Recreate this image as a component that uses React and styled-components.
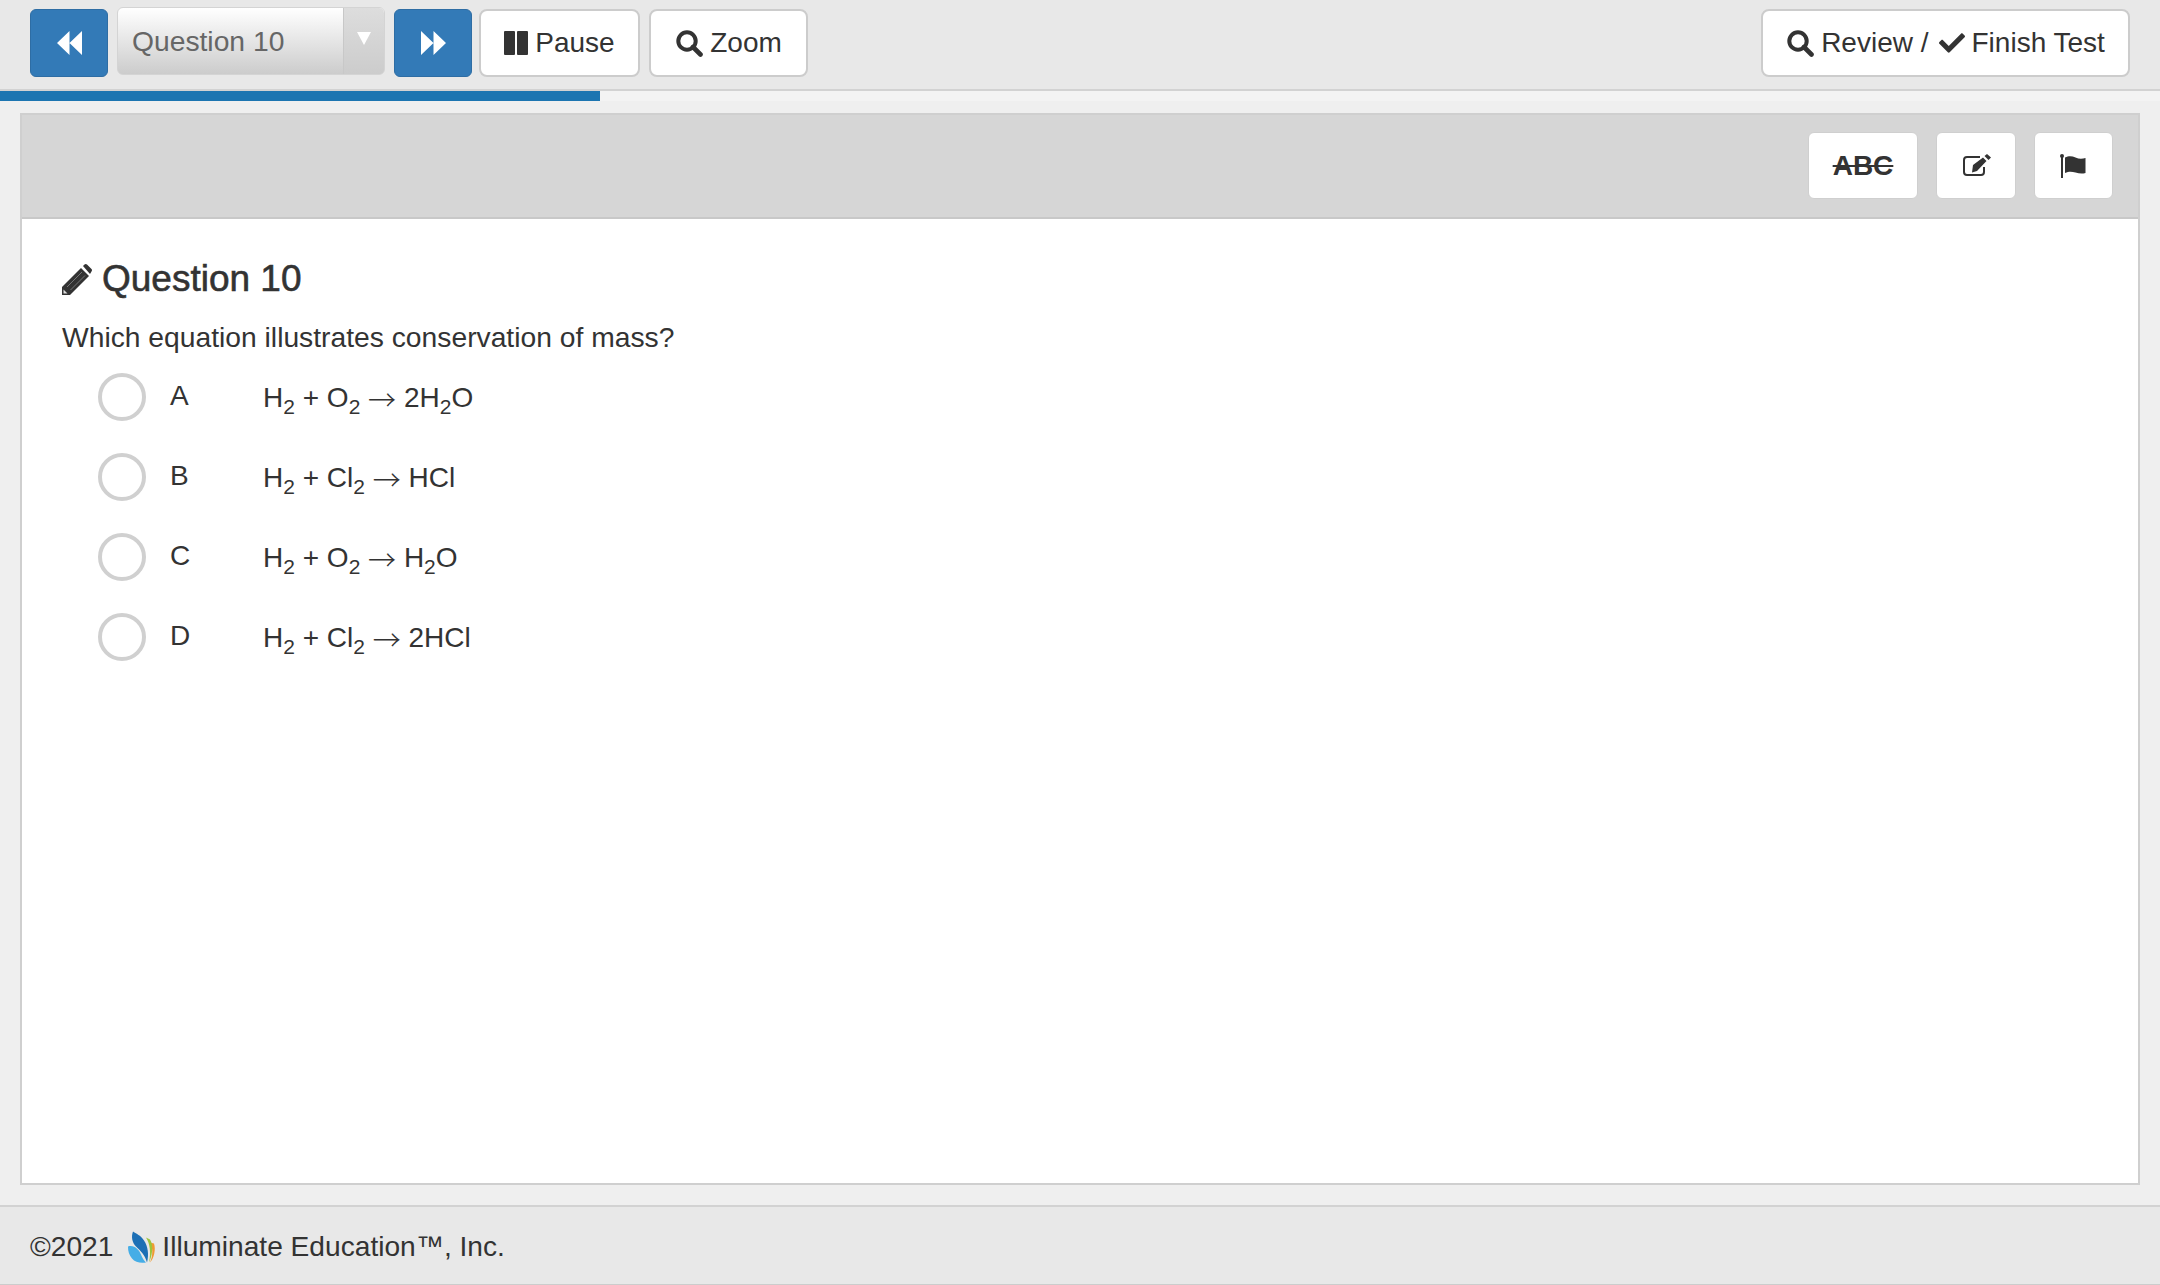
import React from 'react';
import styled, { createGlobalStyle } from 'styled-components';
import { FaCheck } from 'react-icons/fa';

const Global = createGlobalStyle`
  html, body { margin: 0; padding: 0; }
  body {
    background: #efefef;
    color: #333;
    font-family: "Liberation Sans", Arial, sans-serif;
    font-size: 28.25px;
  }
`;

const Page = styled.div`
  height: 1285px;
  display: flex;
  flex-direction: column;
  overflow: hidden;
`;

const TopBar = styled.header`
  height: 89px;
  box-sizing: content-box;
  flex: none;
  background: #e8e8e8;
  border-bottom: 2px solid #d2d2d2;
  display: flex;
  align-items: flex-start;
  padding: 0 30px 0 30px;
`;

const Group = styled.div`
  display: flex;
  align-items: flex-start;
  gap: 9px;
`;

const Spacer = styled.div`
  flex: 1;
`;

const NavButton = styled.button`
  width: 78px;
  height: 68px;
  margin-top: 9px;
  padding: 0;
  display: flex;
  align-items: center;
  justify-content: center;
  background: #337ab7;
  border: 1px solid #2e6da4;
  border-radius: 6px;
`;

const Select = styled.div`
  width: 268px;
  height: 68px;
  margin-top: 7px;
  box-sizing: border-box;
  display: flex;
  border: 1px solid #d4d4d4;
  border-radius: 6px;
  overflow: hidden;
  background: linear-gradient(#ffffff, #cccccc);
`;

const SelectLabel = styled.div`
  flex: 1;
  padding-left: 14px;
  line-height: 66px;
  color: #666;
  font-size: 28.25px;
`;

const SelectArrow = styled.div`
  width: 41px;
  display: flex;
  justify-content: center;
  padding-top: 24px;
  box-sizing: border-box;
  background: linear-gradient(#dddddd, #cccccc);
  border-left: 1px solid #c8c8c8;
`;

const Triangle = styled.div`
  width: 0;
  height: 0;
  border-left: 7px solid transparent;
  border-right: 7px solid transparent;
  border-top: 13px solid #fff;
`;

const ToolButton = styled.button`
  height: 68px;
  margin-top: 9px;
  margin-left: ${p => p.$ml || 0}px;
  width: ${p => p.$w}px;
  padding: 0;
  display: flex;
  align-items: center;
  justify-content: center;
  gap: 7px;
  background: #fff;
  border: 2px solid #ccc;
  border-radius: 8px;
  color: #333;
  font-family: inherit;
  font-size: 28px;
`;

const Check = styled(FaCheck)`
  margin-left: 3px;
`;

const Track = styled.div`
  height: 10px;
  flex: none;
  background: #f3f3f3;
`;

const Fill = styled.div`
  height: 100%;
  background: #1c75b1;
`;

const Main = styled.main`
  flex: 1;
  min-height: 0;
  display: flex;
  padding: 12px 20px 20px 20px;
`;

const Panel = styled.section`
  flex: 1;
  display: flex;
  flex-direction: column;
  background: #fff;
  border: 2px solid #cfcfcf;
`;

const PanelHead = styled.div`
  height: 104px;
  flex: none;
  box-sizing: border-box;
  display: flex;
  align-items: flex-start;
  justify-content: flex-end;
  gap: 18px;
  padding: 17px 25px 0 0;
  background: #d6d6d6;
  border-bottom: 2px solid #c8c8c8;
`;

const HeadButton = styled.button`
  width: ${p => p.$w}px;
  height: 67px;
  padding: 0;
  display: flex;
  align-items: center;
  justify-content: center;
  background: #fff;
  border: 1px solid #cfcfcf;
  border-radius: 6px;
  color: #333;
  font-family: inherit;
  font-size: 28px;
  font-weight: 700;
  text-decoration: line-through;
`;

const Body = styled.div`
  padding: 39px 0 0 40px;
`;

const Heading = styled.h2`
  margin: 0;
  height: 42px;
  display: flex;
  align-items: center;
  gap: 10px;
  font-size: 37px;
  font-weight: 400;
  -webkit-text-stroke: 0.6px #333;
  line-height: 42px;
`;

const Prompt = styled.p`
  margin: 20px 0 0;
  font-size: 28.25px;
  line-height: 34px;
`;

const Options = styled.div`
  margin-top: 19px;
  display: flex;
  flex-direction: column;
  gap: 32px;
`;

const Option = styled.div`
  height: 48px;
  display: flex;
  align-items: center;
  padding-left: 36px;
`;

const Radio = styled.span`
  width: 48px;
  height: 48px;
  box-sizing: border-box;
  border: 4px solid #d0d0d0;
  border-radius: 50%;
  background: #fff;
`;

const Letter = styled.span`
  width: 93px;
  margin-left: 24px;
  margin-top: -3px;
  font-size: 28px;
`;

const Formula = styled.span`
  margin-top: 1px;
  font-size: 28px;
  sub {
    font-size: 21px;
    line-height: 0;
  }
`;

const Arrow = styled.span`
  font-family: "Noto Sans CJK SC", sans-serif;
  font-weight: 300;
  font-size: 28px;
  line-height: 0;
  vertical-align: -4px;
`;

const Footer = styled.footer`
  height: 80px;
  flex: none;
  display: flex;
  align-items: center;
  padding: 3px 0 0 30px;
  box-sizing: border-box;
  background: #e8e8e8;
  border-top: 2px solid #d2d2d2;
  border-bottom: 1px solid #cccccc;
  font-size: 28.15px;
`;

const Logo = styled.svg`
  margin: 0 6px 0 15px;
`;

const Search = ({ size = 28 }) => (
  <svg width={size} height={size} viewBox="0 0 28 28" fill="none" stroke="#333">
    <circle cx="12" cy="12" r="8.7" strokeWidth="4" />
    <path d="M18 18l7.5 7.5" strokeWidth="4.6" strokeLinecap="round" />
  </svg>
);

const Back = () => (
  <svg width="25" height="24" viewBox="0 0 25 24" fill="#fff">
    <path d="M0 12 12.500 0v24zM12.500 12 25 0v24z" />
  </svg>
);

const Forward = () => (
  <svg width="25" height="24" viewBox="0 0 25 24" fill="#fff">
    <path d="M0 0l12.500 12L0 24zM12.500 0 25 12 12.500 24z" />
  </svg>
);

const Pause = () => (
  <svg width="24" height="24" viewBox="0 0 24 24" fill="#333">
    <rect x="0" y="0" width="11" height="24" rx="1" />
    <rect x="13" y="0" width="11" height="24" rx="1" />
  </svg>
);

const Pencil = () => (
  <svg width="30" height="31" viewBox="0 0 30 31">
    <path d="M0 31v-8L19 4l8 8L8 31zM21 2l1.500-1.500a2 2 0 0 1 2.500 0l4.500 4.500a2 2 0 0 1 0 2.500L28 10z" fill="#333" />
    <path d="M5 23 20 8M8.500 26 23 11.500" stroke="#888" strokeWidth="0.8" />
    <path d="M1.500 25.500 5.500 29.500H1.500z" fill="#ddd" />
  </svg>
);

const EditIcon = () => (
  <svg width="29" height="23" viewBox="0 0 29 23">
    <path d="M18 3H5a3 3 0 0 0-3 3v12a3 3 0 0 0 3 3h14a3 3 0 0 0 3-3v-5" fill="none" stroke="#333" strokeWidth="2" />
    <path d="M11 11 21 3.500l3.500 3.500-9.500 10-5 1.500zM22.500 2l2.500-2 4 3.500-2.500 2.500z" fill="#333" />
  </svg>
);

const FlagIcon = () => (
  <svg width="28" height="24" viewBox="0 0 28 24" fill="#333">
    <rect x="1" y="1" width="2" height="23" />
    <circle cx="2" cy="2" r="2" />
    <path d="M5 3.500c4-2 7-1.500 10.500 0s6.500 1.500 10 .5v15c-3.500 1-6.500.5-10-.5S9 17 5 19z" />
  </svg>
);

const Butterfly = () => (
  <Logo width="28" height="33" viewBox="0 0 28 32">
    <path d="M22 11c3 5 3 13 0 20 4-4 6-13 4-19z" fill="#f09a32" />
    <path d="M18 6c4 6 5 15 3 25 3-6 5-17 1-23z" fill="#9cc43c" />
    <path d="M5 0C3 5 4 11 8 15s9 8 11 16c2-8 1-16-3-22S9 3 5 0z" fill="#1c6fb5" />
    <path d="M0 15c6-2 11 3 13 8s4 7 5 8c-5 1-11 0-14-4S0 20 0 15z" fill="#45ade6" />
  </Logo>
);

const Right = () => <Arrow>→</Arrow>;

const options = [
  { letter: 'A', formula: <>H<sub>2</sub> + O<sub>2</sub> <Right /> 2H<sub>2</sub>O</> },
  { letter: 'B', formula: <>H<sub>2</sub> + Cl<sub>2</sub> <Right /> HCl</> },
  { letter: 'C', formula: <>H<sub>2</sub> + O<sub>2</sub> <Right /> H<sub>2</sub>O</> },
  { letter: 'D', formula: <>H<sub>2</sub> + Cl<sub>2</sub> <Right /> 2HCl</> },
];

export default function App() {
  return (
    <Page>
      <Global />
      <TopBar>
        <Group>
          <NavButton><Back /></NavButton>
          <Select>
            <SelectLabel>Question 10</SelectLabel>
            <SelectArrow><Triangle /></SelectArrow>
          </Select>
          <NavButton><Forward /></NavButton>
          <ToolButton $w={161} $ml={-2}><Pause /> Pause</ToolButton>
          <ToolButton $w={159}><Search /> Zoom</ToolButton>
        </Group>
        <Spacer />
        <ToolButton $w={369}>
          <Search /> Review / <Check size={26} /> Finish Test
        </ToolButton>
      </TopBar>
      <Track><Fill style={{ width: 600 }} /></Track>
      <Main>
        <Panel>
          <PanelHead>
            <HeadButton $w={110}>ABC</HeadButton>
            <HeadButton $w={80}><EditIcon /></HeadButton>
            <HeadButton $w={79}><FlagIcon /></HeadButton>
          </PanelHead>
          <Body>
            <Heading><Pencil /> Question 10</Heading>
            <Prompt>Which equation illustrates conservation of mass?</Prompt>
            <Options>
              {options.map(o => (
                <Option key={o.letter}>
                  <Radio />
                  <Letter>{o.letter}</Letter>
                  <Formula>{o.formula}</Formula>
                </Option>
              ))}
            </Options>
          </Body>
        </Panel>
      </Main>
      <Footer>
        ©2021 <Butterfly /> Illuminate Education™, Inc.
      </Footer>
    </Page>
  );
}
